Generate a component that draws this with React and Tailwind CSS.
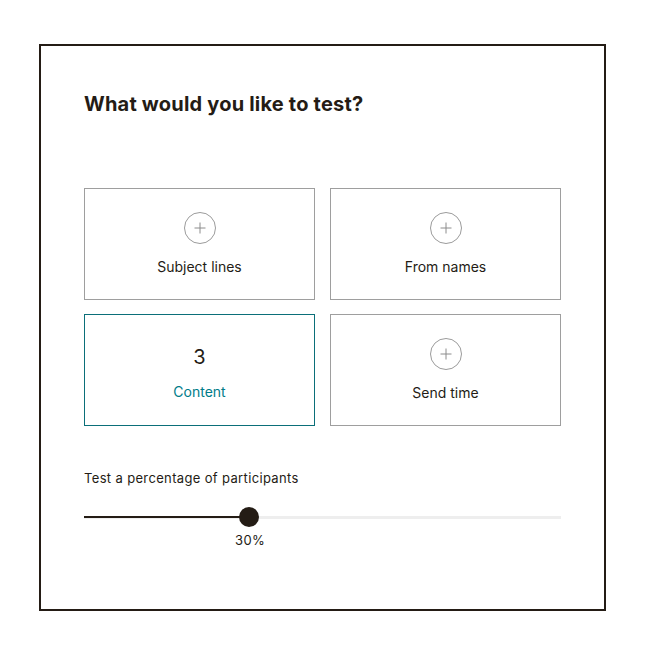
import React from 'react';

const PlusCircle = () => (
  <svg width="32" height="32" viewBox="0 0 32 32" fill="none">
    <circle cx="16" cy="16" r="15.5" stroke="#9b9b9b" strokeWidth="1" />
    <path d="M16 10.5v11M10.5 16h11" stroke="#8c8c8c" strokeWidth="1" />
  </svg>
);

function Option({ label }) {
  return (
    <div className="h-[112px] border border-[#9e9e9e] flex flex-col items-center pt-[23px]">
      <PlusCircle />
      <div className="mt-[13px] text-[14px] leading-5 text-[#241c15]">{label}</div>
    </div>
  );
}

export default function App() {
  const pct = 165; // knob offset in px along the 477px track
  return (
    <div className="min-h-screen bg-white pt-[44px] pl-[39px]" style={{ fontFamily: 'Inter, "Liberation Sans", sans-serif' }}>
      <div className="w-[567px] h-[567px] border-2 border-[#241c15] px-[43px] pt-[44px]">
        <h2 className="text-[20px] leading-7 font-bold tracking-[0.2px] text-[#241c15]">What would you like to test?</h2>

        <div className="mt-[70px] grid grid-cols-2 gap-x-[15px] gap-y-[14px]">
          <Option label="Subject lines" />
          <Option label="From names" />
          <div className="h-[112px] border border-[#0b6f79] flex flex-col items-center pt-[28px]">
            <div className="text-[20px] leading-7 text-[#241c15]">3</div>
            <div className="mt-[11px] text-[14px] leading-5 text-[#007c89]">Content</div>
          </div>
          <Option label="Send time" />
        </div>

        <div className="mt-[43px] text-[13px] leading-[18px] tracking-[0.35px] text-[#241c15]">Test a percentage of participants</div>
        <div className="relative mt-[20px] h-5">
          <div className="absolute left-0 right-0 top-[9px] h-[3px] bg-[#eeeeee]" />
          <div className="absolute left-0 top-[9px] h-[2px] bg-[#241c15]" style={{ width: pct }} />
          <div className="absolute top-0 w-5 h-5 rounded-full bg-[#241c15]" style={{ left: pct - 10 }} />
        </div>
        <div className="mt-[4px] ml-[146px] w-[40px] text-center text-[13px] leading-[18px] tracking-[0.3px] text-[#241c15]">30%</div>
      </div>
    </div>
  );
}
